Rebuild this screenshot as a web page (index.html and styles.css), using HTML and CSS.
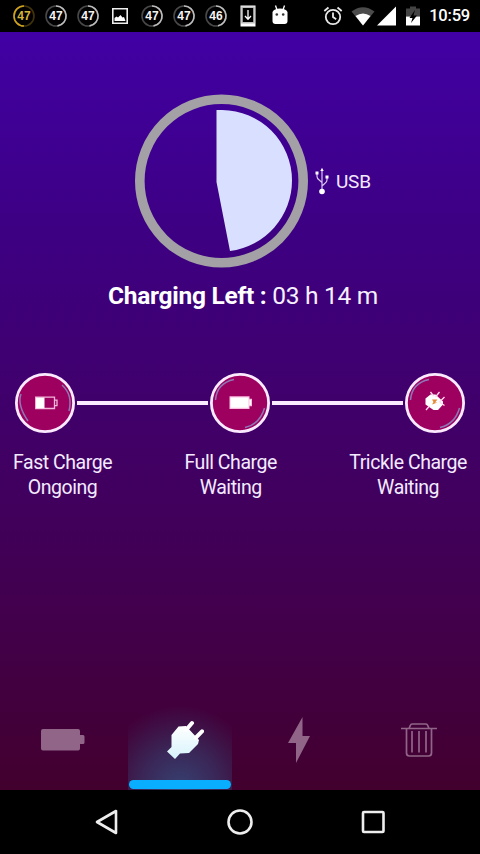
FILE: index.html
```html
<!DOCTYPE html>
<html lang="en">
<head>
    <meta charset="UTF-8">
    <meta name="viewport" content="width=device-width, initial-scale=1.0">
    <title>Charging</title>
    <link rel="stylesheet" href="styles.css">
</head>
<body>
<div class="phone">
    <div class="status-bar">
        <div class="notifications">
            <svg class="level level-gold" viewBox="0 0 24 24"><circle cx="12" cy="12" r="10"/><path d="M12 22A10 10 0 0 1 12 2"/><text x="12" y="16.300">47</text></svg>
            <svg class="level" viewBox="0 0 24 24"><circle cx="12" cy="12" r="10"/><path d="M12 2A10 10 0 0 1 13.500 21.900"/><text x="12" y="16.300">47</text></svg>
            <svg class="level" viewBox="0 0 24 24"><circle cx="12" cy="12" r="10"/><path d="M12 2A10 10 0 0 1 13.500 21.900"/><text x="12" y="16.300">47</text></svg>
            <svg class="level" viewBox="0 0 24 24"><path d="M4.800 4.800h14.400v14.400H4.800z" class="photo-frame"/><path d="M6.500 17v-3l2-1.500 1.500 1 2.500-2.500 2 2.500 1.500-.5 1.500 4z" class="solid"/></svg>
            <svg class="level" viewBox="0 0 24 24"><circle cx="12" cy="12" r="10"/><path d="M12 2A10 10 0 0 1 13.500 21.900"/><text x="12" y="16.300">47</text></svg>
            <svg class="level" viewBox="0 0 24 24"><circle cx="12" cy="12" r="10"/><path d="M12 2A10 10 0 0 1 13.500 21.900"/><text x="12" y="16.300">47</text></svg>
            <svg class="level" viewBox="0 0 24 24"><circle cx="12" cy="12" r="10"/><path d="M12 2A10 10 0 0 1 14 21.800"/><text x="12" y="16.300">46</text></svg>
            <svg class="level" viewBox="0 0 24 24"><path d="M4.500 1.500h15v21h-15z" class="solid"/><path d="M6 3.200h12v15.600H6z" fill="#000"/><path d="M12 6v9M9 12l3 3.200 3-3.200" class="thin"/></svg>
            <svg class="level" viewBox="0 0 24 24"><path d="M4.500 8Q6 4.500 12 4.500T19.500 8v9q0 3-3 3h-9q-3 0-3-3z" class="solid"/><path d="M7.500 1.500 9 6M16.500 1.500 15 6" class="thin"/><circle cx="8.800" cy="10.500" r="1.300" class="dot"/><circle cx="15.200" cy="10.500" r="1.300" class="dot"/></svg>
        </div>
        <div class="system">
            <svg class="alarm" width="20" height="20" viewBox="0 0 20 20"><circle cx="10" cy="11" r="7.200"/><path d="M10 6.500V11l3.200 2.200M1.300 5 5.500 1.500M18.700 5l-4.200-3.500"/></svg>
            <svg class="wifi" width="24" height="20" viewBox="0 0 24 20"><path d="M.5 5.500Q12-3 23.500 5.500L12 19.500z" fill="#4b4b4b"/><path d="M4.500 10Q12 5 19.500 10L12 19.500z" fill="#fff"/></svg>
            <svg class="signal" width="19" height="20" viewBox="0 0 19 20"><path d="M19 .5v19H0z" fill="#fff"/></svg>
            <svg class="power" width="14" height="20" viewBox="0 0 14 20"><path d="M0 2.500h4V.5h6v2h4v8H0z" fill="#444"/><path d="M0 10.500h14v9H0z" fill="#fff"/><path d="M9 4 3.500 12h3L5 17l6-7.500H7.500z" fill="#000"/></svg>
            <span class="clock">10:59</span>
        </div>
    </div>

    <div class="screen">
        <div class="gauge-row">
            <svg class="gauge" width="174" height="174" viewBox="0 0 174 174">
                <circle cx="87.500" cy="87" r="81.700"/>
                <path d="M82.500 16H88A70.500 70.500 0 0 1 158 86.500A71 71 0 0 1 96 157L82.500 88z"/>
            </svg>
            <svg class="usb-icon" width="14" height="28" viewBox="0 0 14 28">
                <path d="M7 4v20M2 6v3.500q0 2 2.200 3.500L7 15.500M12 10v3q0 2-2.200 3.500L7 19"/>
                <path d="M5.300 4 7 .8 8.700 4zM.5 4.500h3v3h-3zM10.500 8.500h3v3h-3z" class="solid"/>
                <circle cx="7" cy="24.500" r="2.800" class="solid"/>
            </svg>
            <span class="usb-label">USB</span>
        </div>
        <div class="time-left"><b>Charging Left :</b> 03 h 14 m</div>

        <div class="stages">
            <svg class="stage" viewBox="0 0 60 60">
                <circle cx="30" cy="30" r="28.600"/>
                <path d="M6 21Q2 32 13 48M47 12Q58 22 54 38" class="shine"/>
                <path d="M20.700 24.200h18.800v11.300H20.700zM40 27.200h2v5.500h-2" class="outline"/>
                <path d="M21 24.500h8.500v10.800H21z" class="solid"/>
            </svg>
            <div class="line"></div>
            <svg class="stage" viewBox="0 0 60 60">
                <circle cx="30" cy="30" r="28.600"/>
                <path d="M5.500 27Q7 10 24 6.500M54.500 35Q50 51 35 54.500" class="shine"/>
                <path d="M19.500 23.300h20v2.500h2.500v7.500h-2.500V36h-20z" fill="#f9bfe0"/>
                <path d="M20.500 24.500h18v10.300h-18zM39.500 27h1.500v5h-1.500z" class="solid"/>
            </svg>
            <div class="line"></div>
            <svg class="stage" viewBox="0 0 60 60">
                <circle cx="30" cy="30" r="28.600"/>
                <path d="M5.500 27Q7 10 24 6.500M54.500 35Q50 51 35 54.500" class="shine"/>
                <path d="M20.500 25.500l5-4h5l7.500 7v3l-5 5.500h-4.500l-8-5.500z" class="solid"/>
                <path d="M25.500 19l3 4M34.500 19l-4 5M39.500 24l-5 5M35 29.500l4.500 3M24.500 33l-3.500 4" stroke="#ffd9ed" stroke-width="1.300"/>
                <path d="M27 26.500h5.500L30 29.500h2.500l-5.500 2 1.500-2.500z" fill="#e58a35"/>
            </svg>
        </div>
        <div class="stage-labels">
            <div>Fast Charge<br>Ongoing</div>
            <div>Full Charge<br>Waiting</div>
            <div>Trickle Charge<br>Waiting</div>
        </div>

        <div class="tabs">
            <div class="tab">
                <svg width="44" height="22" viewBox="0 0 44 22"><path d="M2 0h35q2 0 2 2v4h3q1.500 0 1.500 1.500v6q0 1.500-1.500 1.500h-3v4.500q0 2-2 2H2q-2 0-2-2V2q0-2 2-2z" fill="#906588"/></svg>
            </div>
            <div class="tab active">
                <svg class="plug" width="38" height="40" viewBox="0 0 38 40">
                    <defs>
                        <linearGradient id="plug" x1="0" y1="0" x2="0" y2="1">
                            <stop offset="0" stop-color="#fff"/>
                            <stop offset="1" stop-color="#d5f3fb"/>
                        </linearGradient>
                    </defs>
                    <path d="M5.500 15 12.500 6.500 20 6l13 14-1 4L23 33l-9 .5L9 39 1 31.500 5.500 27z" fill="url(#plug)"/>
                    <path d="M20.500 9.500 26 3M30 17.500l6-6.200" class="prongs"/>
                </svg>
                <div class="marker"></div>
            </div>
            <div class="tab">
                <svg width="22" height="46" viewBox="0 0 22 46"><path d="M14.500 0v19H22L8 46V26H0z" fill="#906588"/></svg>
            </div>
            <div class="tab">
                <svg class="trash" width="36" height="34" viewBox="0 0 36 34"><path d="M0 5.500h36M8 5.500 9.500 2q.4-1 1.500-1h14q1.200 0 1.500 1L28 5.500M5.500 6v24q0 3 3 3h19q3 0 3-3V6M11 8v21.500M18 8v21.500M25 8v21.500"/></svg>
            </div>
        </div>
    </div>

    <div class="nav-bar">
        <svg width="26" height="26" viewBox="0 0 26 26"><path d="M22 2v22L3 13z"/></svg>
        <svg width="26" height="26" viewBox="0 0 26 26"><circle cx="13" cy="13" r="11.500"/></svg>
        <svg width="26" height="26" viewBox="0 0 26 26"><rect x="3" y="3" width="20.500" height="20" rx="1"/></svg>
    </div>
</div>
</body>
</html>
```

FILE: styles.css
```css
body {
    margin: 0;
    background-color: #000000;
    color: #f4eaff;
    font-family: Roboto, "Liberation Sans", sans-serif;
}

svg {
    display: block;
    flex: none;
}

.phone {
    width: 480px;
    height: 854px;
    display: flex;
    flex-direction: column;
    overflow: hidden;
}

/* Status bar */
.status-bar {
    height: 32px;
    display: flex;
    justify-content: space-between;
    background-color: #000000;
    box-sizing: border-box;
    padding: 0 10px 0 12px;
}

.notifications {
    display: flex;
    align-items: center;
    gap: 8px;
}

.level {
    width: 24px;
    height: 24px;
    fill: none;
    stroke: #bdbdbd;
    stroke-width: 1.6;
}

.level circle {
    stroke: #484848;
}

.level text {
    font-family: "Liberation Sans", sans-serif;
    font-size: 12px;
    font-weight: bold;
    text-anchor: middle;
    fill: #f5f5f5;
    stroke: none;
}

.level-gold {
    stroke: #cda31f;
}

.level-gold circle {
    stroke: #40330b;
}

.level-gold text {
    fill: #d5b43a;
}

.solid {
    fill: #ffffff;
    stroke: none;
}

.photo-frame {
    stroke: #eeeeee;
}

.thin {
    stroke: #ffffff;
    stroke-width: 1.3;
}

.level .dot {
    fill: #333333;
    stroke: none;
}

.system {
    display: flex;
    align-items: center;
}

.alarm {
    fill: none;
    stroke: #e8e8e8;
    stroke-width: 1.8;
    margin-right: 8px;
}

.signal {
    margin-left: 2px;
    margin-right: 10px;
}

.clock {
    margin-left: 9px;
    color: #ffffff;
    font-size: 16.5px;
    font-weight: 500;
    line-height: 34px;
    letter-spacing: -0.2px;
}

/* Charging screen */
.screen {
    flex: 1;
    display: flex;
    flex-direction: column;
    background: linear-gradient(#4100a4, #3d0084 25%, #40006a 50%, #42004b 78%, #42002e);
}

.gauge-row {
    display: flex;
    align-items: center;
    padding: 62px 0 0 134px;
}

.gauge circle {
    fill: none;
    stroke: #a3a1a5;
    stroke-width: 9.6;
}

.gauge path {
    fill: #d9e0ff;
}

.usb-icon {
    margin-left: 7px;
    fill: none;
    stroke: #d9c4ef;
    stroke-width: 1.2;
}

.usb-label {
    margin: 1px 0 0 7px;
    font-size: 19px;
    letter-spacing: -0.2px;
}

.time-left {
    margin-top: 12px;
    padding-left: 6px;
    text-align: center;
    font-size: 24.5px;
    line-height: 31px;
    letter-spacing: -0.27px;
    color: #f7f0ff;
}

.time-left b {
    color: #ffffff;
}

.stages {
    display: flex;
    align-items: center;
    padding: 62px 15px 0;
}

.stage {
    width: 60px;
    height: 60px;
    fill: none;
}

.stage circle {
    fill: #9e0060;
    stroke: #fbeaff;
    stroke-width: 2.8;
}

.shine {
    stroke: #8d78b5;
    stroke-width: 1.5;
}

.outline {
    stroke: #f3b5da;
    stroke-width: 1.3;
}

.line {
    flex: 1;
    height: 4px;
    margin: 0 2px;
    background-color: #fbeaff;
}

.stage-labels {
    display: flex;
    justify-content: space-between;
    padding: 17px 13px 0;
    text-align: center;
    font-size: 19.5px;
    line-height: 25px;
    letter-spacing: -0.45px;
}

/* Bottom tabs */
.tabs {
    display: flex;
    height: 100px;
    margin-top: auto;
    padding-left: 3px;
}

.tab {
    width: 120px;
    display: flex;
    flex-direction: column;
    align-items: center;
    justify-content: center;
}

.tab.active {
    width: 104px;
    margin: 0 7px 0 5px;
    justify-content: flex-end;
    background: radial-gradient(ellipse 80px 85px at 50% 100%, #364271, #3a2657 50%, transparent);
}

.plug {
    margin-left: 10px;
}

.prongs {
    stroke: #ffffff;
    stroke-width: 4;
    stroke-linecap: round;
}

.marker {
    width: 102px;
    height: 9px;
    margin: 20px 0 1px;
    border-radius: 5px;
    background-color: #0aaeff;
}

.trash {
    fill: none;
    stroke: #906588;
    stroke-width: 1.7;
}

/* Android navigation */
.nav-bar {
    height: 64px;
    display: flex;
    align-items: center;
    justify-content: center;
    gap: 107px;
    background-color: #000000;
}

.nav-bar svg {
    fill: none;
    stroke: #eeeeee;
    stroke-width: 2.6;
    stroke-linejoin: round;
}
```
